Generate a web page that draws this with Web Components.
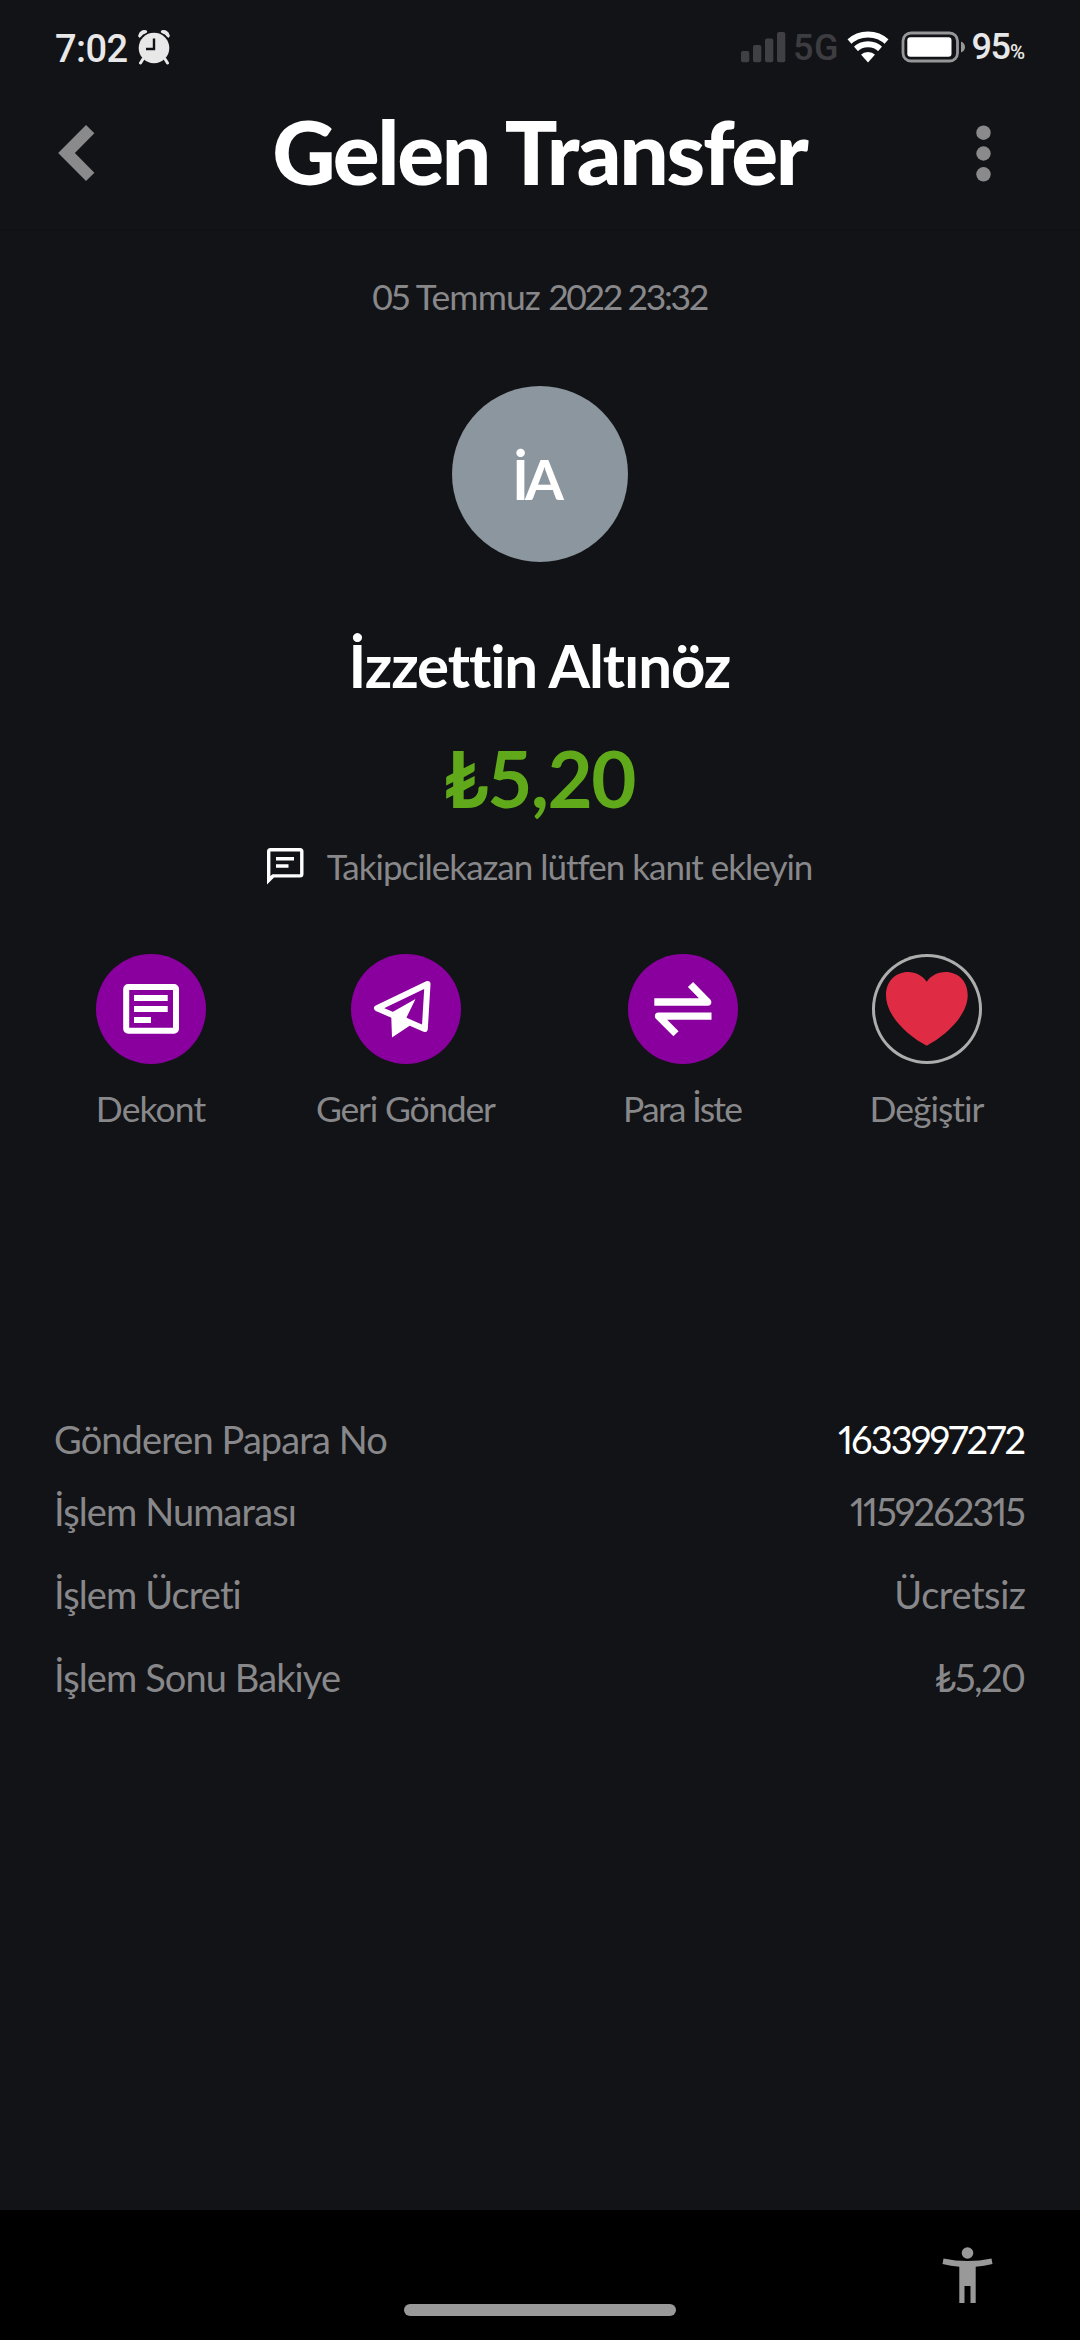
<!DOCTYPE html>
<html lang="tr">
<head>
<meta charset="utf-8">
<title>Gelen Transfer</title>
<style>
html,body{margin:0;padding:0;background:#121317}
body{font-family:Lato,"Open Sans",sans-serif;color:#fff}
</style>
</head>
<body>
<transfer-page></transfer-page>

<script>
const define = (name, html) => {
  const tpl = document.createElement('template');
  tpl.innerHTML = html;
  customElements.define(name, class extends HTMLElement {
    constructor() {
      super();
      this.attachShadow({ mode: 'open' }).append(tpl.content.cloneNode(true));
    }
  });
};

/* A tracked line of text. --ls is the letter spacing; the trailing space is given back. */
define('t-line', `
<style>
:host{display:inline-block;white-space:nowrap;letter-spacing:var(--ls,0px);margin-right:calc(var(--ls,0px) * -1)}
</style><slot></slot>`);

define('status-bar', `
<style>
:host{display:flex;justify-content:space-between;height:94px;box-sizing:border-box;padding:0 55px 0 55px;align-items:center;font-family:Roboto,sans-serif;font-weight:500;color:#e8e8e8}
div{display:flex;align-items:center}
svg{display:block}
.time{font-size:38px;line-height:44px;margin-top:3px;--ls:-.6px}
.alarm{margin-left:9px}
.net{font-size:36px;line-height:40px;color:#3d3d41;margin-left:7px;margin-top:2px;--ls:.6px}
.wifi{margin-left:8px}
.bat{margin-left:12px}
.pct{font-size:36px;line-height:40px;margin-left:6px;margin-top:5px;align-items:baseline;--ls:-1.6px}
.pct small{font-size:20.5px;margin-left:-1px}
</style>
<div>
  <t-line class="time">7:02</t-line>
  <svg class="alarm" width="34" height="36" viewBox="0 0 34 36">
    <g fill="#e8e8e8"><path d="M2 8A5.2 5.2 0 0 1 10.5 2.6Q5.500 4.500 2.500 9ZM32 8A5.200 5.200 0 0 0 23.500 2.600Q28.500 4.500 31.500 9Z"/><circle cx="17" cy="19" r="15.300"/></g>
    <path d="M2.800 6.800Q4.500 3.800 8.500 2.800M31.200 6.800Q29.500 3.800 25.500 2.800M6 30L3.500 34M28 30L30.500 34" fill="none" stroke="#e8e8e8" stroke-width="3" stroke-linecap="round"/>
    <path d="M17 9.500V20H9" fill="none" stroke="#121317" stroke-width="2.400"/>
  </svg>
</div>
<div>
  <svg width="46" height="32" viewBox="0 0 46 32" fill="#404044"><rect x="1" y="20" width="8.300" height="11.300" rx="2"/><rect x="13" y="14" width="8.300" height="17.300" rx="2"/><rect x="25" y="7.500" width="8.300" height="23.800" rx="2"/><rect x="37" y="1" width="8.300" height="30.300" rx="2"/></svg>
  <t-line class="net">5G</t-line>
  <svg class="wifi" width="42" height="32" viewBox="0 0 42 32">
    <clipPath id="w"><path d="M21 31.500L-10.100-3.500H52.100Z"/></clipPath>
    <g clip-path="url(#w)" fill="none" stroke="#fff"><circle cx="21" cy="31.500" r="28" stroke-width="6"/><circle cx="21" cy="31.500" r="18.200" stroke-width="6"/><circle cx="21" cy="31.500" r="10.500" fill="#fff" stroke="none"/></g>
  </svg>
  <svg class="bat" width="65" height="32" viewBox="0 0 65 32">
    <rect x="2" y="2" width="54.500" height="28" rx="8" fill="none" stroke="#97979a" stroke-width="2.800"/>
    <rect x="6.300" y="6.300" width="44.200" height="19.500" rx="3" fill="#fff"/>
    <path d="M60 10.500Q64 12 64 16T60 21.500Z" fill="#97979a"/>
  </svg>
  <div class="pct"><t-line>95</t-line><small>%</small></div>
</div>`);

define('app-header', `
<style>
:host{display:flex;align-items:center;justify-content:space-between;height:136px;box-sizing:border-box;padding:0 89px 17px 58px;border-bottom:1px solid #0f1014}
svg{display:block}
h1{margin:0 0 2px 10px;font-size:87.500px;line-height:100px;font-weight:900;--ls:-2.350px}
</style>
<svg width="37" height="56" viewBox="0 0 37 56"><path d="M32.200 4.200L8.500 28L32.200 51.800" fill="none" stroke="#8a8a8c" stroke-width="11.800"/></svg>
<h1><t-line><slot></slot></t-line></h1>
<svg width="15" height="57" viewBox="0 0 15 57" fill="#8a8a8c"><circle cx="7.500" cy="7.700" r="7.200"/><circle cx="7.500" cy="28.500" r="7.200"/><circle cx="7.500" cy="49.300" r="7.200"/></svg>`);

define('transfer-summary', `
<style>
:host{display:flex;flex-direction:column;align-items:center}
.date{font-size:35.500px;line-height:44px;color:#88888a;margin-top:45px;--ls:-.900px}
.date span{letter-spacing:-2.400px}
.avatar{box-sizing:border-box;width:176px;height:176px;border-radius:50%;background:#8b969e;display:flex;align-items:center;justify-content:center;margin-top:67px;padding:9px 4px 0 0;font-weight:700;font-size:56px;line-height:60px;--ls:-3.800px}
.name{font-weight:700;font-size:60px;line-height:72px;margin-top:67px;--ls:-1.100px}
.amount{font-weight:700;font-size:78px;line-height:90px;color:#5fa91a;margin-top:32px;--ls:-1.500px}
.note{display:flex;align-items:center;gap:23px;font-size:35px;line-height:44px;color:#88888a;margin-top:21px;--ls:-1px}
</style>
<t-line class="date"><span>05</span> Temmuz <span>2022 23:32</span></t-line>
<div class="avatar"><t-line>İA</t-line></div>
<t-line class="name">İzzettin Altınöz</t-line>
<t-line class="amount">₺5,20</t-line>
<div class="note">
  <svg width="37" height="37" viewBox="0 0 37 37"><path d="M0 36.500V3.500Q0 0 3.500 0H33Q36.500 0 36.500 3.500V26Q36.500 29.500 33 29.500H7ZM3.400 28L5.500 26.200H33.100V3.400H3.400Z" fill="#fff" fill-rule="evenodd"/><path d="M9 10.700H27M9 18H21.500" stroke="#fff" stroke-width="3.400"/></svg>
  <t-line>Takipcilekazan lütfen kanıt ekleyin</t-line>
</div>`);

define('action-button', `
<style>
:host{display:flex;flex-direction:column;align-items:center;gap:23px;font-size:35.500px;line-height:44px;color:#88888a}
.disc{width:110px;height:110px;border-radius:50%;background:#8a009e;box-sizing:border-box;display:flex}
:host([outlined]) .disc{background:none;box-shadow:inset 0 0 0 3px #adadad}
</style>
<div class="disc"><slot name="icon"></slot></div>
<t-line><slot></slot></t-line>`);

define('action-row', `
<style>
:host{display:grid;grid-template-columns:302px 208px 346px 142px;justify-items:center;margin-top:66px}
</style><slot></slot>`);

define('detail-row', `
<style>
:host{display:flex;justify-content:space-between;padding:0 54px 0 54px;font-size:38px;line-height:44px;color:#88888a;font-feature-settings:"pnum"}
:host([strong]) .v{color:#fff}
.k{--ls:-.900px}
.v{--ls:var(--vls)}
</style><t-line class="k"><slot name="label"></slot></t-line><t-line class="v"><slot></slot></t-line>`);

define('detail-list', `
<style>
:host{display:flex;flex-direction:column;gap:39px;margin-top:286px}
::slotted(:first-child){margin-bottom:-11px}
</style><slot></slot>`);

define('nav-bar', `
<style>
:host{display:grid;grid-template-columns:1fr 272px 1fr;height:130px;background:#000}
.pill{height:12px;border-radius:6px;background:#999;align-self:end;margin-bottom:24px}
svg{justify-self:end;margin:37px 87px 0 0}
</style>
<span></span><div class="pill"></div>
<svg width="51" height="57" viewBox="0 0 51 57" fill="#999"><circle cx="25.500" cy="6" r="5.800"/><path d="M1.500 11.500Q25.500 16.500 49.500 11.500L50.500 17Q42 19 33.700 19.700V56H28.500V39H22.500V56H17.300V19.700Q9 19 .5 17Z"/></svg>`);

define('transfer-page', `
<style>
:host{display:flex;flex-direction:column;width:1080px;height:2340px;overflow:hidden;background:#121317}
main{flex:1}
svg{display:block}
</style>
<status-bar></status-bar>
<app-header>Gelen Transfer</app-header>
<main>
  <transfer-summary></transfer-summary>
  <action-row>
    <action-button style="--ls:-.9px"><svg slot="icon" width="110" height="110" viewBox="0 0 110 110" fill="none" stroke="#fff" stroke-width="6"><rect x="30.200" y="33" width="49.800" height="43.800" rx="2"/><path d="M38 44H71.700M38 55H71.700M38 66H55"/></svg>Dekont</action-button>
    <action-button style="--ls:-1.23px"><svg slot="icon" width="110" height="110" viewBox="0 0 110 110"><path d="M76.500 30L26 54.200L73.800 75Z" fill="none" stroke="#fff" stroke-width="6" stroke-linejoin="round"/><path d="M64.500 45L55.500 63.500L59 71.500L41 83.500L40.300 64L41.500 58Z" fill="#fff"/></svg>Geri Gönder</action-button>
    <action-button style="--ls:-1.74px"><svg slot="icon" width="110" height="110" viewBox="0 0 110 110" fill="none" stroke="#fff" stroke-width="7.300" stroke-linejoin="round"><path d="M26.300 48H79.700L62.500 30.500M83.500 62.200H30.500L48 79.800"/></svg>Para İste</action-button>
    <action-button outlined style="--ls:-1.01px"><svg slot="icon" width="110" height="110" viewBox="0 0 110 110"><path d="M54.700 91.700C36 82 14 62 14 41C14 27 24 18 36 18C44 18 51 22 54.700 27.700C58.400 22 65.400 18 73.500 18C86 18 95.700 27 95.700 41C95.700 62 73 82 54.700 91.700Z" fill="#df2c44"/></svg>Değiştir</action-button>
  </action-row>
  <detail-list>
    <detail-row strong style="--vls:-1.9px"><span slot="label">Gönderen Papara No</span>1633997272</detail-row>
    <detail-row style="--vls:-1.95px"><span slot="label">İşlem Numarası</span>1159262315</detail-row>
    <detail-row style="--vls:-.44px"><span slot="label">İşlem Ücreti</span>Ücretsiz</detail-row>
    <detail-row style="--vls:-1.61px"><span slot="label">İşlem Sonu Bakiye</span>₺5,20</detail-row>
  </detail-list>
</main>
<nav-bar></nav-bar>`);
</script>
</body>
</html>
